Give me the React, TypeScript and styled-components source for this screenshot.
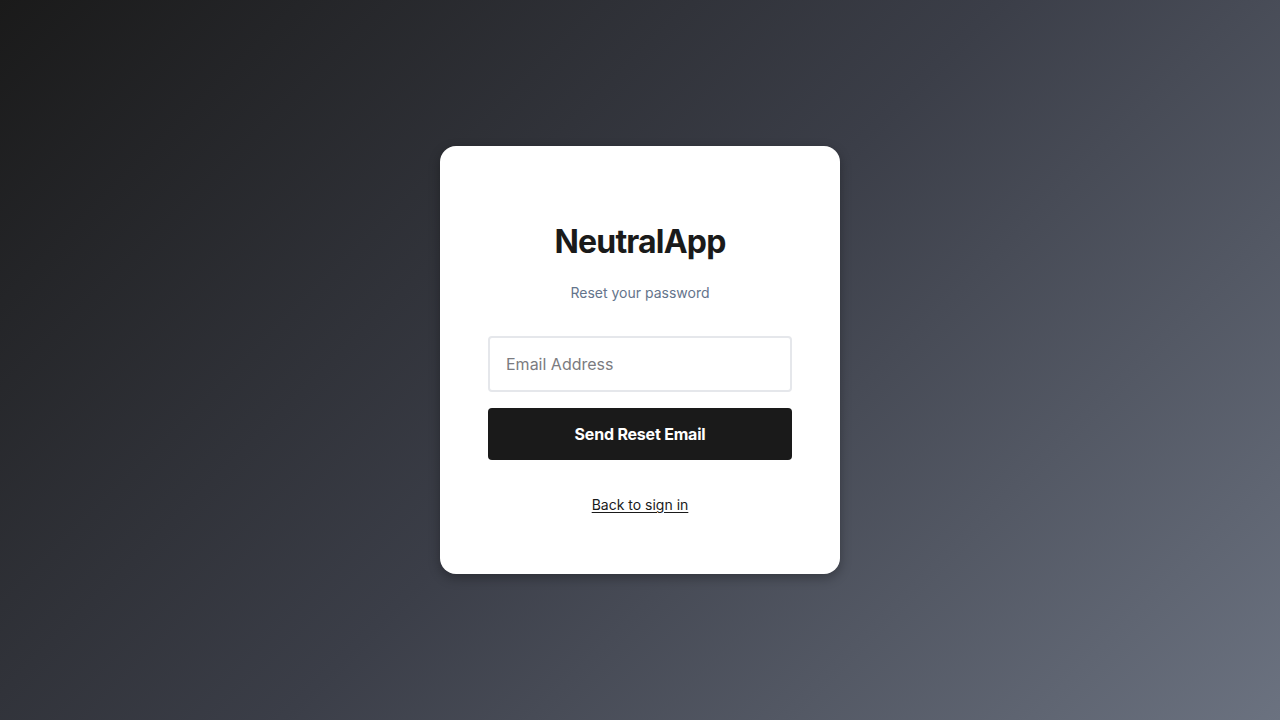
import React from "react";
import styled, { createGlobalStyle } from "styled-components";

const GlobalStyle = createGlobalStyle`
  * { box-sizing: border-box; }
  html, body { margin: 0; padding: 0; }
  body {
    font-family: Inter, "Noto Sans", Arial, sans-serif;
    -webkit-font-smoothing: antialiased;
  }
`;

const Page = styled.div`
  width: 100vw;
  height: 100vh;
  display: flex;
  align-items: center;
  justify-content: center;
  background: linear-gradient(135deg, #1a1a1a 0%, #3b3e48 50%, #6b7280 100%);
`;

const Card = styled.div`
  width: 400px;
  background: #ffffff;
  border-radius: 16px;
  padding: 77px 48px 61px;
  box-shadow: 0 4px 12px rgba(0, 0, 0, 0.3);
  display: flex;
  flex-direction: column;
  align-items: stretch;
`;

const Title = styled.h1`
  margin: 0 0 23px;
  font-size: 32px;
  line-height: 38px;
  font-weight: 700;
  letter-spacing: -0.8px;
  color: #1a1a1a;
  text-align: center;
`;

const Subtitle = styled.p`
  margin: 0 0 35px;
  font-size: 14px;
  line-height: 17px;
  color: #64748b;
  text-align: center;
`;

const Form = styled.form`
  display: flex;
  flex-direction: column;
  gap: 16px;
`;

const Input = styled.input`
  height: 56px;
  width: 100%;
  border: 2px solid #e5e7eb;
  border-radius: 4px;
  padding: 0 16px;
  font-family: inherit;
  font-size: 16px;
  color: #1a1a1a;
  outline: none;
  &::placeholder { color: #7b7b80; }
`;

const Button = styled.button`
  height: 52px;
  width: 100%;
  border: none;
  border-radius: 4px;
  background: #1a1a1a;
  color: #ffffff;
  font-family: inherit;
  font-size: 16px;
  font-weight: 700;
  letter-spacing: -0.2px;
  cursor: pointer;
`;

const LinkRow = styled.div`
  margin-top: 36px;
  text-align: center;
  line-height: 17px;
`;

const BackLink = styled.a`
  font-size: 14px;
  color: #1a1a1a;
  text-decoration: underline;
  text-underline-offset: 2px;
`;

export default function App() {
  return (
    <>
      <GlobalStyle />
      <Page>
        <Card>
          <Title>NeutralApp</Title>
          <Subtitle>Reset your password</Subtitle>
          <Form onSubmit={(e) => e.preventDefault()}>
            <Input type="email" placeholder="Email Address" />
            <Button type="submit">Send Reset Email</Button>
          </Form>
          <LinkRow>
            <BackLink href="#">Back to sign in</BackLink>
          </LinkRow>
        </Card>
      </Page>
    </>
  );
}
